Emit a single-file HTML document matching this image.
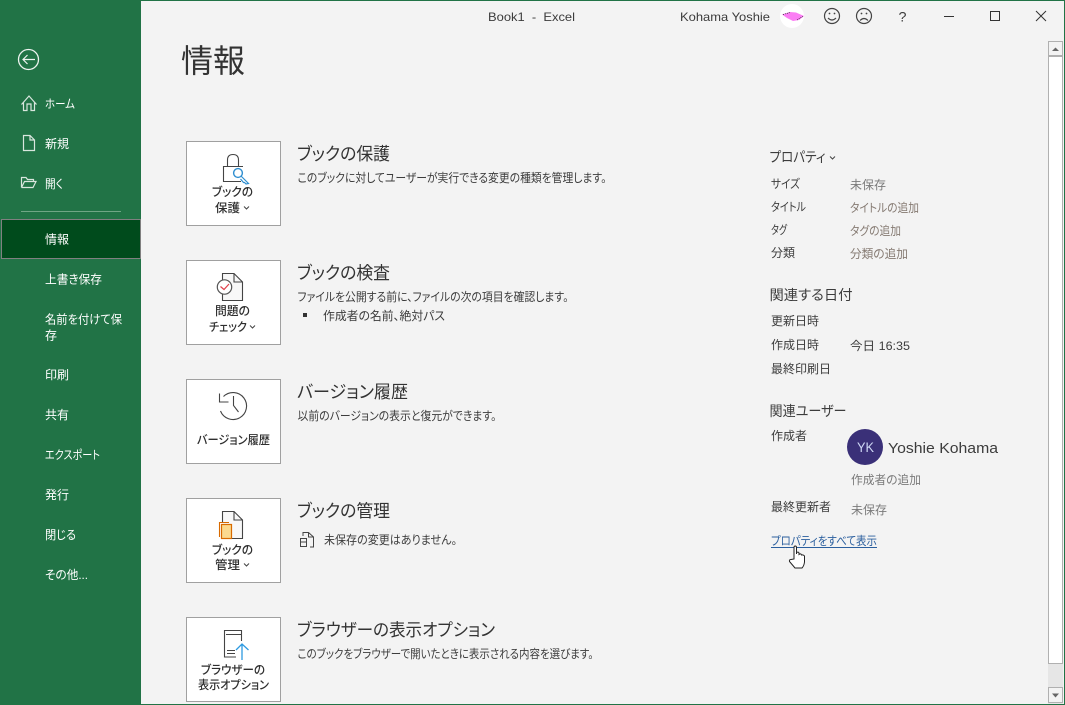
<!DOCTYPE html>
<html lang="ja"><head><meta charset="utf-8"><title>Book1 - Excel</title>
<style>
html,body{margin:0;padding:0;background:#f3f3f3;overflow:hidden}
svg{display:block}
text{font-family:"Liberation Sans","Noto Sans CJK JP",sans-serif;font-size:12px;fill:#3c3c3c;font-feature-settings:"palt";white-space:pre}
.s text{fill:#fff}
.b text{fill:#2e2e2e;font-weight:500;text-anchor:start}
.h text{font-size:17.5px;fill:#333;font-weight:400}
.d text{fill:#3c3c3c}
.g text{fill:#7a7a7a}
.o text{fill:#857a72}
.t text{font-size:14px;fill:#3c3c3c}
.i{fill:none;stroke:#d9e6de;stroke-width:1.2}
.k{fill:none;stroke:#444;stroke-width:1.2}
</style></head><body>
<svg width="1065" height="705" viewBox="0 0 1065 705" xmlns="http://www.w3.org/2000/svg">
<rect width="1065" height="705" fill="#f3f3f3"/>
<rect x="0.5" y="0.5" width="1064" height="704" fill="none" stroke="#217346"/>
<rect x="0" y="0" width="141" height="705" fill="#217346"/>
<rect x="1.5" y="219.500" width="139" height="39" fill="#004b1c" stroke="#000" shape-rendering="crispEdges"/>
<rect x="1.5" y="219.500" width="139" height="39" fill="none" stroke="#fff" stroke-dasharray="1 1" shape-rendering="crispEdges"/>
<line x1="21" y1="211.5" x2="121" y2="211.5" stroke="#6fa685"/>

<!-- sidebar icons -->
<circle cx="28.5" cy="59.5" r="10" fill="none" stroke="#eef4f0" stroke-width="1.3"/>
<path d="M35 59.5H23M27.5 55L23 59.5L27.5 64" fill="none" stroke="#eef4f0" stroke-width="1.2"/>
<path class="i" d="M21.5 104.5L29 96L36.500 104.500M23.500 102.500V110.500H27V104H31V110.500H34.500V102.500"/>
<path class="i" d="M23.500 135.500H30L34.500 140V150.500H23.500ZM30 135.500V140H34.500"/>
<path class="i" d="M21.500 187.500V177.500H26L27.500 179.500H33.500V181.500M21.500 187.500H33L36 181.500H24.500L21.500 187.500"/>

<g class="s">
<text x="45" y="108" textLength="30" lengthAdjust="spacingAndGlyphs">ホーム</text>
<text x="45" y="148" textLength="24" lengthAdjust="spacingAndGlyphs">新規</text>
<text x="45" y="188" textLength="18" lengthAdjust="spacingAndGlyphs">開く</text>
<text x="45" y="243.500" textLength="24" lengthAdjust="spacingAndGlyphs">情報</text>
<text x="45" y="283.500" textLength="57" lengthAdjust="spacingAndGlyphs">上書き保存</text>
<text x="45" y="323.500" textLength="77" lengthAdjust="spacingAndGlyphs">名前を付けて保</text>
<text x="45" y="339.500" textLength="12" lengthAdjust="spacingAndGlyphs">存</text>
<text x="45" y="379" textLength="24" lengthAdjust="spacingAndGlyphs">印刷</text>
<text x="45" y="419" textLength="24" lengthAdjust="spacingAndGlyphs">共有</text>
<text x="45" y="459" textLength="55" lengthAdjust="spacingAndGlyphs">エクスポート</text>
<text x="45" y="499" textLength="24" lengthAdjust="spacingAndGlyphs">発行</text>
<text x="45" y="539" textLength="31" lengthAdjust="spacingAndGlyphs">閉じる</text>
<text x="45" y="579" textLength="43" lengthAdjust="spacingAndGlyphs">その他...</text>
</g>

<!-- title bar -->
<text x="488" y="21" textLength="87" lengthAdjust="spacingAndGlyphs">Book1  -  Excel</text>
<text x="680" y="21" textLength="90" lengthAdjust="spacingAndGlyphs">Kohama Yoshie</text>
<circle cx="792" cy="16" r="12" fill="#fff"/>
<path d="M782 14.500L790 12L796 12.500L804 16L799 20L793 21L787 18Z" fill="#fb7df4"/>
<path d="M783 14.500L790 12.500M797 20L803 16.500" stroke="#222" stroke-width=".7" stroke-dasharray="1 1" fill="none"/>
<circle cx="832" cy="16" r="7.500" class="k"/>
<circle cx="829.500" cy="13.500" r=".9" fill="#444"/><circle cx="834.500" cy="13.500" r=".9" fill="#444"/>
<path class="k" d="M828 18Q832 22 836 18"/>
<circle cx="864" cy="16" r="7.500" class="k"/>
<circle cx="861.500" cy="13.500" r=".9" fill="#444"/><circle cx="866.500" cy="13.500" r=".9" fill="#444"/>
<path class="k" d="M860 20.500Q864 16.500 868 20.500"/>
<text x="898.500" y="21.500" style="font-size:14px" textLength="8" lengthAdjust="spacingAndGlyphs">?</text>
<line x1="944" y1="16.500" x2="954" y2="16.500" stroke="#333"/>
<rect x="990.500" y="11.500" width="9" height="9" fill="none" stroke="#333"/>
<path d="M1036 11L1046 21M1046 11L1036 21" stroke="#333" fill="none"/>

<text x="181" y="72" style="font-size:32px;font-weight:400;fill:#333" textLength="64" lengthAdjust="spacingAndGlyphs">情報</text>

<!-- boxes -->
<g fill="#fff" stroke="#a0a0a0">
<rect x="186.500" y="141.500" width="94" height="84"/>
<rect x="186.500" y="260.500" width="94" height="84"/>
<rect x="186.500" y="379.500" width="94" height="84"/>
<rect x="186.500" y="498.500" width="94" height="84"/>
<rect x="186.500" y="617.500" width="94" height="84"/>
</g>

<!-- protect icon -->
<path d="M227.500 166V160Q227.500 154.500 233 154.500Q238.500 154.500 238.500 160V166" fill="none" stroke="#444" stroke-width="1.1"/>
<path d="M243 166.500H223.500V181.500H241" fill="none" stroke="#444" stroke-width="1.1"/>
<circle cx="238" cy="173" r="4.400" fill="#fff" stroke="#2e8ed0" stroke-width="1.400"/>
<path d="M241 176L248.500 183.500L246 184L244.500 182.500L243.500 182.500L240.500 179" fill="#fff" stroke="#2e8ed0" stroke-width="1.200"/>
<!-- inspect icon -->
<path d="M222.500 280V273.500H234L242.500 282V300.500H222.500V294" fill="#f8f8f8" stroke="#444" stroke-width="1.100"/>
<path d="M234 273.500V282H242.500" fill="none" stroke="#444" stroke-width="1.100"/>
<circle cx="224.500" cy="287" r="7.200" fill="#fff" stroke="#555" stroke-width="1.200"/>
<path d="M220.500 286.500L224 289.500L229 284" fill="none" stroke="#e0404a" stroke-width="1.200"/>
<!-- history icon -->
<path d="M223.500 396.500A13.500 13.500 0 1 1 220.500 411" fill="none" stroke="#444" stroke-width="1.100"/>
<path d="M219.500 393.500V402H228.500" fill="none" stroke="#444" stroke-width="1.100"/>
<path d="M233.500 396V405.500L238.500 412" fill="none" stroke="#444" stroke-width="1.100"/>
<!-- manage icon -->
<path d="M222.500 522V511.500H234L242.500 520V538.500H232" fill="#f8f8f8" stroke="#444" stroke-width="1.100"/>
<path d="M234 511.500V520H242.500" fill="none" stroke="#444" stroke-width="1.100"/>
<path d="M219.500 537V522.500H229" fill="none" stroke="#d86a00" stroke-width="1.100"/>
<rect x="221.500" y="524.500" width="10" height="14" fill="#fbd98f" stroke="#d86a00" stroke-width="1.200"/>
<!-- browser icon -->
<path d="M236 657H224.500V630.500H241.500V641" fill="#fff" stroke="#444" stroke-width="1.100"/>
<path d="M226 634.500H241M227 650.500H235M227 653.500H235" stroke="#444" fill="none"/>
<path d="M242 660V644M236 650L242 644L248.500 650" fill="none" stroke="#2e9ae0" stroke-width="1.300"/>

<g class="b">
<text x="212" y="196" textLength="41" lengthAdjust="spacingAndGlyphs">ブックの</text>
<text x="215" y="212" textLength="25" lengthAdjust="spacingAndGlyphs">保護</text>
<text x="215" y="315" textLength="35" lengthAdjust="spacingAndGlyphs">問題の</text>
<text x="209" y="331" textLength="38" lengthAdjust="spacingAndGlyphs">チェック</text>
<text x="197" y="444" textLength="73" lengthAdjust="spacingAndGlyphs">バージョン履歴</text>
<text x="212" y="554" textLength="41" lengthAdjust="spacingAndGlyphs">ブックの</text>
<text x="215" y="569" textLength="25" lengthAdjust="spacingAndGlyphs">管理</text>
<text x="201" y="674" textLength="64" lengthAdjust="spacingAndGlyphs">ブラウザーの</text>
<text x="198" y="689" textLength="71" lengthAdjust="spacingAndGlyphs">表示オプション</text>
</g>
<g fill="none" stroke="#444" stroke-width="1">
<path d="M244 206.500L246.500 209L249 206.500"/>
<path d="M250 325.500L252.500 328L255 325.500"/>
<path d="M244 563.500L246.500 566L249 563.500"/>
<path d="M830 156.500L832.500 159L835 156.500"/>
</g>

<g class="h">
<text x="297" y="160" textLength="93" lengthAdjust="spacingAndGlyphs">ブックの保護</text>
<text x="297" y="279" textLength="93" lengthAdjust="spacingAndGlyphs">ブックの検査</text>
<text x="297" y="398" textLength="111" lengthAdjust="spacingAndGlyphs">バージョン履歴</text>
<text x="297" y="517" textLength="93" lengthAdjust="spacingAndGlyphs">ブックの管理</text>
<text x="297" y="636" textLength="198" lengthAdjust="spacingAndGlyphs">ブラウザーの表示オプション</text>
</g>
<g class="d">
<text x="297.500" y="182" textLength="309" lengthAdjust="spacingAndGlyphs">このブックに対してユーザーが実行できる変更の種類を管理します。</text>
<text x="297.500" y="301" textLength="271" lengthAdjust="spacingAndGlyphs">ファイルを公開する前に、ファイルの次の項目を確認します。</text>
<text x="323" y="320" textLength="122" lengthAdjust="spacingAndGlyphs">作成者の名前、絶対パス</text>
<text x="297.500" y="420" textLength="199" lengthAdjust="spacingAndGlyphs">以前のバージョンの表示と復元ができます。</text>
<text x="324" y="544" textLength="133" lengthAdjust="spacingAndGlyphs">未保存の変更はありません。</text>
<text x="297.500" y="658" textLength="296" lengthAdjust="spacingAndGlyphs">このブックをブラウザーで開いたときに表示される内容を選びます。</text>
</g>
<rect x="303" y="313" width="4" height="4" fill="#333"/>
<path d="M303 536V532.500H308.500L313.500 537V547H310M308.500 532.500V537H313.500" fill="none" stroke="#444"/>
<rect x="300.500" y="538.500" width="6" height="8" fill="none" stroke="#444"/>
<path d="M300.500 542H306.500" stroke="#444"/>

<!-- right column -->
<g class="t">
<text x="769.500" y="162" textLength="56" lengthAdjust="spacingAndGlyphs">プロパティ</text>
<text x="769.500" y="300" textLength="83" lengthAdjust="spacingAndGlyphs">関連する日付</text>
<text x="769.500" y="416" textLength="77" lengthAdjust="spacingAndGlyphs">関連ユーザー</text>
</g>
<g class="d">
<text x="771" y="188" textLength="29" lengthAdjust="spacingAndGlyphs">サイズ</text>
<text x="771" y="211" textLength="35" lengthAdjust="spacingAndGlyphs">タイトル</text>
<text x="771" y="234" textLength="16" lengthAdjust="spacingAndGlyphs">タグ</text>
<text x="771" y="257" textLength="24" lengthAdjust="spacingAndGlyphs">分類</text>
<text x="771" y="325" textLength="48" lengthAdjust="spacingAndGlyphs">更新日時</text>
<text x="771" y="349" textLength="48" lengthAdjust="spacingAndGlyphs">作成日時</text>
<text x="771" y="373" textLength="60" lengthAdjust="spacingAndGlyphs">最終印刷日</text>
<text x="771" y="440" textLength="36" lengthAdjust="spacingAndGlyphs">作成者</text>
<text x="771" y="511" textLength="60" lengthAdjust="spacingAndGlyphs">最終更新者</text>
<text x="850" y="350" textLength="60" lengthAdjust="spacingAndGlyphs">今日 16:35</text>
</g>
<g class="g">
<text x="850" y="189" textLength="36" lengthAdjust="spacingAndGlyphs">未保存</text>
<text x="851" y="484" textLength="70" lengthAdjust="spacingAndGlyphs">作成者の追加</text>
<text x="851" y="514" textLength="36" lengthAdjust="spacingAndGlyphs">未保存</text>
</g>
<g class="o">
<text x="850" y="212" textLength="69" lengthAdjust="spacingAndGlyphs">タイトルの追加</text>
<text x="850" y="235" textLength="51" lengthAdjust="spacingAndGlyphs">タグの追加</text>
<text x="850" y="258" textLength="58" lengthAdjust="spacingAndGlyphs">分類の追加</text>
</g>
<circle cx="865" cy="447" r="18" fill="#3a3078"/>
<text x="857" y="452" style="font-size:14px;fill:#cfd8f5" textLength="17" lengthAdjust="spacingAndGlyphs">YK</text>
<text x="888" y="453" style="font-size:15px;fill:#3c3c3c" textLength="110" lengthAdjust="spacingAndGlyphs">Yoshie Kohama</text>
<text x="771" y="545" style="fill:#2b5f9e" textLength="106" lengthAdjust="spacingAndGlyphs">プロパティをすべて表示</text>
<line x1="771" y1="547.500" x2="877" y2="547.500" stroke="#2b5f9e"/>

<!-- hand cursor -->
<path d="M794 559V547.500Q794 546 795.200 546Q796.500 546 796.500 547.500V554V552.500Q798.500 551.500 799 553V554.500Q801 553 801.500 555Q803.500 554.500 804.500 556V562Q804 566 802 568H795L789.500 561.500Q789 559.500 791 559.500Z" fill="#fff" stroke="#222" stroke-width="1"/>

<!-- scrollbar -->
<rect x="1048" y="41" width="15" height="664" fill="#e6e6e6"/>
<rect x="1048.500" y="41.500" width="14" height="14" fill="#f3f3f3" stroke="#b0b0b0"/>
<rect x="1048.500" y="56.500" width="14" height="607" fill="#fff" stroke="#b0b0b0"/>
<rect x="1048.500" y="687.500" width="14" height="15" fill="#f3f3f3" stroke="#b0b0b0"/>
<path d="M1052 51L1055.500 47.500L1059 51Z" fill="#666"/>
<path d="M1052 693.500H1059L1055.500 697.500Z" fill="#666"/>
<rect x="0" y="704" width="1065" height="1" fill="#217346"/>
<rect x="1064" y="0" width="1" height="705" fill="#217346"/>
</svg>
</body></html>
